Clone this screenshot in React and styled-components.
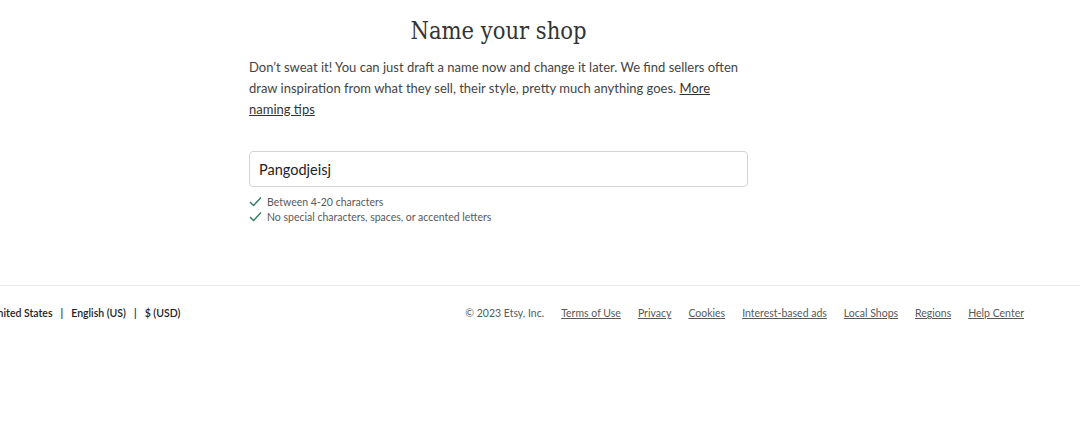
import styled, { createGlobalStyle } from 'styled-components';

const Global = createGlobalStyle`
  body {
    margin: 0;
    background: #fff;
    font-family: Lato, "Open Sans", "Liberation Sans", sans-serif;
    color: #222;
    overflow: hidden;
  }
`;

const Page = styled.div`
  width: 1080px;
  height: 441px;
  display: flex;
  flex-direction: column;
`;

const Main = styled.main`
  width: 499px;
  margin-left: 249px;
  padding-top: 14px;
  height: 285px;
  box-sizing: border-box;
`;

const Title = styled.h1`
  margin: 0 0 8px;
  text-align: center;
  font-family: "DejaVu Serif Condensed", "DejaVu Serif", serif;
  font-stretch: condensed;
  font-weight: 300;
  font-size: 23.5px;
  line-height: 35px;
  color: #333;
`;

const Intro = styled.p`
  margin: 0;
  font-size: 13px;
  line-height: 21px;
  color: #444;
  a {
    color: #333;
    text-decoration: underline;
  }
`;

const Field = styled.div`
  margin-top: 31px;
  height: 36px;
  box-sizing: border-box;
  border: 1px solid #d4d4d4;
  border-radius: 4px;
  display: flex;
  align-items: center;
  padding: 0 9px;
  font-size: 14.5px;
  color: #222;
`;

const Rules = styled.ul`
  list-style: none;
  margin: 7px 0 0;
  padding: 0;
`;

const Rule = styled.li`
  display: flex;
  align-items: center;
  gap: 5px;
  height: 15px;
  font-size: 10.5px;
  color: #595959;
`;

const Footer = styled.footer`
  border-top: 1px solid #eaeaea;
  height: 54px;
  display: flex;
  align-items: center;
  justify-content: space-between;
  padding: 0 56px 0 0;
  margin-left: -10px;
`;

const Locale = styled.div`
  font-size: 10.5px;
  font-weight: 600;
  color: #222;
  display: flex;
  gap: 8px;
`;

const Links = styled.nav`
  display: flex;
  gap: 17px;
  font-size: 10.5px;
  color: #595959;
  a {
    color: #595959;
    text-decoration: underline;
  }
`;

const Check = () => (
  <svg width="13" height="11" viewBox="0 0 13 11">
    <path d="M1 6 L4.5 9.5 L12 1.5" fill="none" stroke="#2c7a5b" strokeWidth="1.3" />
  </svg>
);

export default function App() {
  return (
    <Page>
      <Global />
      <Main>
        <Title>Name your shop</Title>
        <Intro>
          Don’t sweat it! You can just draft a name now and change it later. We find sellers often
          draw inspiration from what they sell, their style, pretty much anything goes.{' '}
          <a href="#">More naming tips</a>
        </Intro>
        <Field>Pangodjeisj</Field>
        <Rules>
          <Rule><Check />Between 4-20 characters</Rule>
          <Rule><Check />No special characters, spaces, or accented letters</Rule>
        </Rules>
      </Main>
      <Footer>
        <Locale>
          <span>United States</span><span>|</span><span>English (US)</span><span>|</span><span>$ (USD)</span>
        </Locale>
        <Links>
          <span>© 2023 Etsy, Inc.</span>
          <a href="#">Terms of Use</a>
          <a href="#">Privacy</a>
          <a href="#">Cookies</a>
          <a href="#">Interest-based ads</a>
          <a href="#">Local Shops</a>
          <a href="#">Regions</a>
          <a href="#">Help Center</a>
        </Links>
      </Footer>
    </Page>
  );
}
